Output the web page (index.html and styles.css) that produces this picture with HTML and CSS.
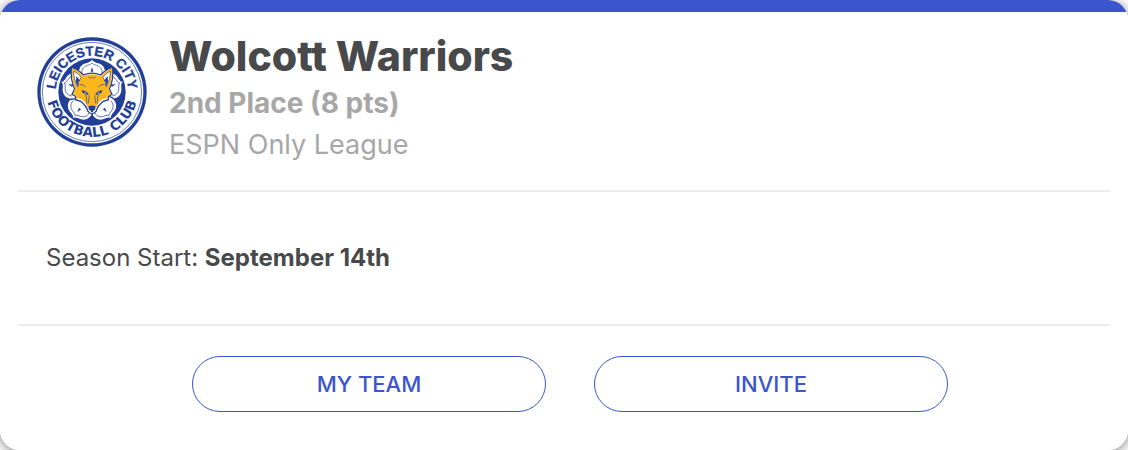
FILE: index.html
```html
<!DOCTYPE html>
<html lang="en">
<head>
<meta charset="utf-8">
<meta name="viewport" content="width=device-width, initial-scale=1">
<title>Wolcott Warriors</title>
<link rel="stylesheet" href="styles.css">
</head>
<body>
<main class="card">
  <header class="team">
    <svg class="crest" viewBox="15 15 330 330" role="img" aria-label="Leicester City Football Club">
      <defs>
        <path id="arc-top" d="M71 180A109 109 0 0 1 289 180"/>
        <path id="arc-bottom" d="M43 160A138 138 0 1 0 317 160"/>
        <clipPath id="disc"><circle cx="180" cy="180" r="97"/></clipPath>
        <g id="petal">
          <path class="white line" d="M180 176C161 158 136 137 139 115C141 98 157 91 167 90Q176 88 180 81Q184 88 193 90C203 91 219 98 221 115C224 137 199 158 180 176Z"/>
          <path class="thin" d="M150 126C147 109 159 101 170 99Q177 97 180 93Q183 97 190 99C201 101 213 109 210 126"/>
          <path class="blue" d="M180 105l4 14h-8z"/>
        </g>
      </defs>
      <circle class="blue" cx="180" cy="180" r="164"/>
      <circle class="white" cx="180" cy="180" r="154"/>
      <circle class="ring" cx="180" cy="180" r="149"/>
      <circle class="blue" cx="180" cy="180" r="101"/>
      <g clip-path="url(#disc)">
        <use href="#petal"/>
        <use href="#petal" transform="rotate(72 180 180)"/>
        <use href="#petal" transform="rotate(144 180 180)"/>
        <use href="#petal" transform="rotate(216 180 180)"/>
        <use href="#petal" transform="rotate(288 180 180)"/>
      </g>
      <text class="crest-text crest-top"><textPath href="#arc-top" startOffset="50%">LEICESTER CITY</textPath></text>
      <text class="crest-text crest-bottom"><textPath href="#arc-bottom" startOffset="50%">FOOTBALL CLUB</textPath></text>
      <path class="white line" d="M118 106C132 110 145 119 154 129Q180 118 206 129C215 119 228 110 242 106C244 129 241 152 232 171L240 187L229 193L229 203L214 208C204 216 196 224 193 237Q180 251 167 237C164 224 156 216 146 208L131 203L131 193L120 187L128 171C119 152 116 129 118 106Z"/>
      <path class="gold" d="M120 109C134 113 146 123 154 132Q180 121 206 132C214 123 226 113 240 109C241 130 238 151 230 170L237 186L226 191L226 200C213 198 204 205 197 216L191 232H169L163 216C156 205 147 198 134 200L134 191L123 186L130 170C122 151 119 130 120 109Z"/>
      <path class="white thin" d="M125 118C136 122 144 130 147 137Q139 145 137 164C129 151 125 134 125 118ZM235 118C224 122 216 130 213 137Q221 145 223 164C231 151 235 134 235 118Z"/>
      <path class="blue" d="M133 132l11 14-6 3 1 15-7-14zM227 132l-11 14 6 3-1 15 7-14z"/>
      <path class="mark" d="M169 134l6 5 5-4 5 4 6-5M143 157l10 2 8 6M217 157l-10 2-8 6"/>
      <path class="blue" d="M148 175Q161 175 171 187Q160 190 153 183ZM212 175Q199 175 189 187Q200 190 207 183Z"/>
      <path class="white" d="M157 180l7 4-5 1zM203 180l-7 4 5 1z"/>
      <path class="mark" d="M161 188Q166 202 164 217M199 188Q194 202 196 217M172 190L169 214M188 190L191 214"/>
      <path class="white" d="M168 224h24l-4 16q-8 6-16 0z"/>
      <path class="blue" d="M169 223Q180 218 191 223L189 233L183 237V241H177V237L171 233Z"/>
    </svg>
    <div class="details">
      <h1 class="name">Wolcott Warriors</h1>
      <p class="place">2nd Place (8 pts)</p>
      <p class="league">ESPN Only League</p>
    </div>
  </header>
  <section class="season">
    <p>Season Start: <strong>September 14th</strong></p>
  </section>
  <div class="actions">
    <button class="action" type="button">MY TEAM</button>
    <button class="action" type="button">INVITE</button>
  </div>
</main>
</body>
</html>
```
FILE: styles.css
```css
* {
  box-sizing: border-box;
}

body {
  margin: 0;
  background: #fff;
  color: #48494b;
  font-family: Inter, "Liberation Sans", sans-serif;
}

h1,
p {
  margin: 0;
}

.card {
  padding: 12px 18px 38px;
  border-radius: 20px;
  background: linear-gradient(#3b55ce 12px, #fff 12px);
  box-shadow: 0 2px 12px rgba(0, 0, 0, 0.5);
}

.team {
  display: flex;
  align-items: flex-start;
  gap: 22px;
  padding: 20px 18px 24px;
}

.crest {
  flex: none;
  width: 110px;
  height: 110px;
  margin: 5px 0 0 1px;
}

.name {
  margin-bottom: 2px;
  font-size: 41px;
  line-height: 48px;
  font-weight: 800;
}

.place,
.league {
  color: #a7a7a8;
  font-size: 28px;
  line-height: 42px;
}

.place {
  font-weight: 700;
}

.league {
  font-size: 27px;
  font-weight: 400;
}

.season {
  padding: 50px 28px;
  border-top: 2px solid #ececec;
  border-bottom: 2px solid #ececec;
  font-size: 24px;
  line-height: 32px;
}

.season strong {
  font-weight: 700;
}

.actions {
  display: flex;
  justify-content: center;
  gap: 48px;
  padding: 30px 0 0 12px;
}

.action {
  flex: 0 1 354px;
  height: 56px;
  padding: 0 16px;
  border: 1px solid #3b55ce;
  border-radius: 28px;
  background: #fff;
  color: #3b55ce;
  font-family: inherit;
  font-size: 22px;
  font-weight: 500;
  cursor: pointer;
}

.blue {
  fill: #213f99;
}

.white {
  fill: #fff;
}

.gold {
  fill: #fdb71a;
}

.line {
  stroke: #213f99;
  stroke-width: 4;
}

.ring,
.thin,
.mark {
  stroke: #213f99;
  stroke-width: 2;
}

.ring,
.mark {
  fill: none;
}

.thin:not(.white) {
  fill: none;
}

.crest-text {
  fill: #213f99;
  font-weight: 700;
  text-anchor: middle;
}

.crest-top {
  stroke: #213f99;
  stroke-width: 1;
  font-family: "Liberation Sans", sans-serif;
  font-size: 40px;
}

.crest-bottom {
  font-family: "DejaVu Sans", sans-serif;
  font-size: 40px;
}
```
